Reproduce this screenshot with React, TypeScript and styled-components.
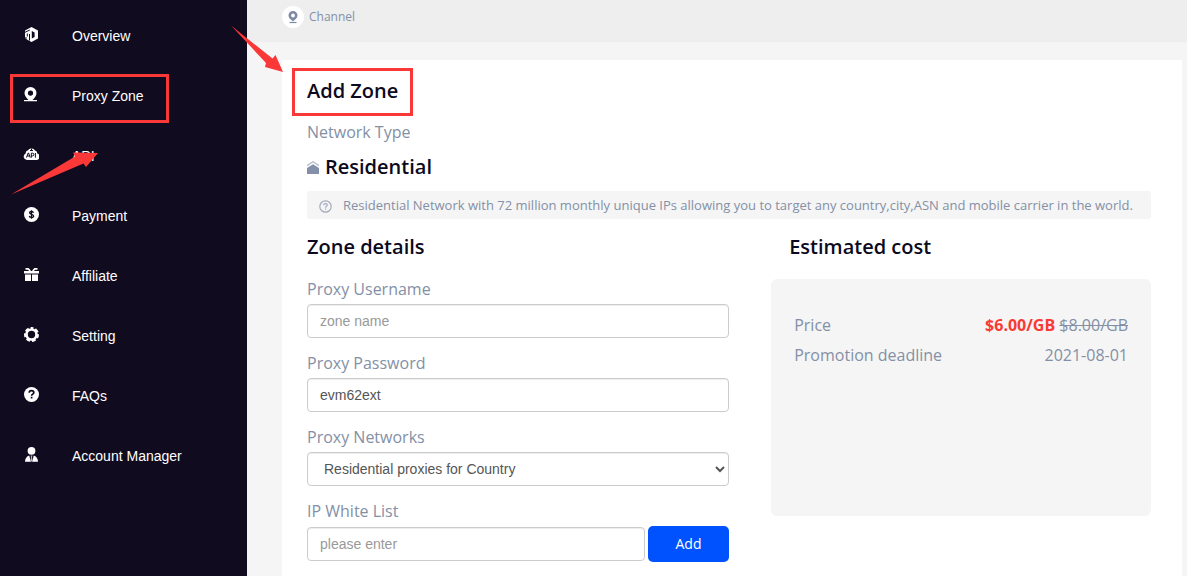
import React from "react";
import styled, { createGlobalStyle } from "styled-components";

const UI_FONT = '"Open Sans", "Noto Sans", sans-serif';
const CONTROL_FONT = '"Liberation Sans", Arial, sans-serif';
const MARK = "#fb3838";

const GlobalStyle = createGlobalStyle`
  *, *::before, *::after { box-sizing: border-box; }
  body { margin: 0; background: #f5f5f5; font-family: ${UI_FONT}; color: #0d0a20; }
  h1, h2, p, ul, dl, dd { margin: 0; padding: 0; }
`;

const Page = styled.div`
  position: relative;
  display: flex;
  min-height: 100vh;
`;

const Sidebar = styled.nav`
  flex: 0 0 247px;
  background: #110b20;
  padding-top: 6px;
`;

const NavList = styled.ul`
  list-style: none;
`;

const NavLink = styled.a`
  position: relative;
  display: flex;
  align-items: center;
  gap: 33px;
  height: 60px;
  padding-left: 23px;
  color: #fff;
  font: 14px/20px ${CONTROL_FONT};
  text-decoration: none;

  svg {
    display: block;
    width: 16px;
    height: 16px;
    margin-bottom: 4px;
  }
`;

const NavMark = styled.span`
  position: absolute;
  left: 10px;
  top: 8px;
  width: 159px;
  height: 49px;
  border: 3px solid ${MARK};
`;

const Main = styled.main`
  flex: 1;
  min-width: 0;
  display: flex;
  flex-direction: column;
`;

const TopBar = styled.header`
  display: flex;
  align-items: center;
  gap: 5px;
  height: 42px;
  padding: 0 35px 8px;
  background: #eeeeee;
  color: #8490a6;
  font-size: 12px;
  line-height: 20px;
`;

const ChannelBadge = styled.span`
  display: flex;
  align-items: center;
  justify-content: center;
  width: 22px;
  height: 22px;
  border-radius: 50%;
  background: #fff;
`;

const Card = styled.section`
  flex: 1;
  margin: 18px 5px 0 35px;
  padding: 16px 31px 14px 25px;
  background: #fff;
`;

const Heading = styled.h2<{ $indent?: boolean }>`
  display: flex;
  align-items: center;
  gap: 6px;
  padding-left: ${(p) => (p.$indent ? 18 : 0)}px;
  font-size: 20px;
  line-height: 30px;
  font-weight: 600;
`;

const MarkedTitle = styled.span`
  position: relative;

  &::after {
    content: "";
    position: absolute;
    inset: -8px -15px -10px;
    border: 3px solid ${MARK};
  }
`;

const NetworkType = styled.p`
  margin: 14px 0 8px;
  color: #8490a6;
  font-size: 16px;
  line-height: 24px;
`;

const Note = styled.p`
  display: flex;
  align-items: center;
  gap: 11px;
  min-height: 28px;
  margin: 9px 0 13px;
  padding: 0 12px;
  border-radius: 3px;
  background: #f5f5f5;
  color: #8490a6;
  font-size: 13px;
  line-height: 20px;

  svg { flex: none; margin-top: 3px; }
`;

const Columns = styled.div`
  display: grid;
  grid-template-columns: 50% 45%;
  justify-content: space-between;
  align-items: start;
`;

const Form = styled.form`
  display: flex;
  flex-direction: column;
  gap: 13px;
  margin-top: 15px;
`;

const Field = styled.div`
  display: flex;
  flex-direction: column;
  gap: 3px;
`;

const Label = styled.label`
  color: #8490a6;
  font-size: 16px;
  line-height: 24px;
`;

const Input = styled.input`
  width: 100%;
  min-width: 0;
  height: 34px;
  padding: 6px 12px;
  border: 1px solid #ccc;
  border-radius: 4px;
  background: #fff;
  box-shadow: inset 0 1px 1px rgba(0, 0, 0, 0.075);
  color: #555;
  font: 14px/20px ${CONTROL_FONT};

  &::placeholder { color: #999; opacity: 1; }
`;

const Select = styled(Input).attrs({ as: "select" })``;

const InputRow = styled.div`
  display: flex;
  align-items: center;
  gap: 3px;
`;

const AddButton = styled.button`
  flex: 0 0 81px;
  height: 36px;
  border: 0;
  border-radius: 5px;
  background: #0052ff;
  color: #fff;
  font: 14px/20px ${UI_FONT};
`;

const CostPanel = styled.dl`
  min-height: 237px;
  margin-top: 17px;
  padding: 31px 23px;
  border-radius: 6px;
  background: #f5f5f5;
  color: #8490a6;
  font-size: 16px;
  line-height: 30px;
`;

const CostRow = styled.div`
  display: flex;
  justify-content: space-between;
`;

const Price = styled.strong`
  color: #f93a34;
  font-weight: 700;
`;

const Arrows = styled.svg`
  position: absolute;
  left: 0;
  top: 0;
  pointer-events: none;
`;

const DARK = "#110b20";

const icons = {
  overview: (
    <svg viewBox="0 0 16 16">
      <path d="M8.500 1 15 4.500v8L8.500 16 2 12.500v-8z" fill="#fff" />
      <path d="M8.800 5 11.600 6.500v4.400L8.800 12.400z" fill={DARK} />
      <path d="M2 6.300 6.800 4M6.500 8v6.500M4.300 7.500v3" fill="none" stroke={DARK} strokeWidth="1" />
      <path d="M1.500 11h2.300v3.500H1.500z" fill={DARK} opacity=".6" />
    </svg>
  ),
  pin: (
    <svg viewBox="0 0 16 16">
      <path fillRule="evenodd" d="M7.500 1a6 6 0 0 1 6 6c0 2.900-2 5-4 7H14v1.300H1V14h4.500c-2-2-4-4.100-4-7a6 6 0 0 1 6-6zm0 3.500a2.600 2.600 0 1 0 0 5.200 2.600 2.600 0 0 0 0-5.200z" fill="#fff" />
    </svg>
  ),
  api: (
    <svg viewBox="0 0 16 16">
      <path d="M4 14a3.400 3.400 0 0 1-1.300-6.500A3 3 0 0 1 5 4.300 3.600 3.600 0 0 1 8.500 2.600 3.800 3.800 0 0 1 12 4.600a2.800 2.800 0 0 1 2.300 2.800A3.400 3.400 0 0 1 13 14z" fill="#fff" />
      <path d="M3.500 11.500 5.200 7h.4l1.600 4.500M4.200 10h2.300M8.300 11.700V7.200h1.200a1.300 1.300 0 0 1 0 2.700H8.300M12.400 7v4.700M8.500 2.600v2.200M7 4.500h3" fill="none" stroke={DARK} strokeWidth="1" />
    </svg>
  ),
  payment: (
    <svg viewBox="0 0 16 16">
      <circle cx="8.500" cy="8.500" r="7.500" fill="#fff" />
      <path d="M10.500 6.700C10.200 5.800 9.500 5.500 8.500 5.500c-1.100 0-1.900.5-1.900 1.300 0 2 4 1 4 3.100 0 .9-.8 1.500-2.100 1.500-1.200 0-2-.5-2.200-1.400M8.500 4.200v8.500" fill="none" stroke={DARK} strokeWidth="1.300" />
    </svg>
  ),
  affiliate: (
    <svg viewBox="0 0 16 16">
      <path d="M1 5h15v2.500H1zM2 8.600h6V15H2zM9 8.600h6V15H9z" fill="#fff" />
      <path d="M2.500 2.800h2.700L7.300 5M14.500 2.800h-2.700L9.700 5" fill="none" stroke="#fff" strokeWidth="1.700" />
    </svg>
  ),
  setting: (
    <svg viewBox="0 0 16 16">
      <circle cx="8.500" cy="8.500" r="5" fill="none" stroke="#fff" strokeWidth="2.600" />
      <circle cx="8.500" cy="8.500" r="6.500" fill="none" stroke="#fff" strokeWidth="2" strokeDasharray="3.834 2" strokeDashoffset="1.917" transform="rotate(-90 8.500 8.500)" />
    </svg>
  ),
  faqs: (
    <svg viewBox="0 0 16 16">
      <circle cx="8.500" cy="8.500" r="7.500" fill="#fff" />
      <path d="M6.200 6.800c0-1.500 1-2.200 2.300-2.200 1.400 0 2.300.8 2.300 2 0 1.600-2.200 1.500-2.200 3.200M8.600 10.800v1.700" fill="none" stroke={DARK} strokeWidth="1.700" />
    </svg>
  ),
  manager: (
    <svg viewBox="0 0 16 16">
      <circle cx="8.500" cy="4.800" r="3.900" fill="#fff" />
      <path d="M2 15.800c0-3.500 1.800-5.500 4.300-6.300l1.500 6.300zM15 15.800c0-3.500-1.800-5.500-4.300-6.300l-1.500 6.300z" fill="#fff" />
      <path d="M7.600 9.600h1.800l-.4 1.600.6 4.300H7.400l.6-4.300z" fill="#fff" opacity=".7" />
    </svg>
  ),
};

const navItems: { label: string; icon: keyof typeof icons; marked?: boolean }[] = [
  { label: "Overview", icon: "overview" },
  { label: "Proxy Zone", icon: "pin", marked: true },
  { label: "API", icon: "api" },
  { label: "Payment", icon: "payment" },
  { label: "Affiliate", icon: "affiliate" },
  { label: "Setting", icon: "setting" },
  { label: "FAQs", icon: "faqs" },
  { label: "Account Manager", icon: "manager" },
];

export default function App() {
  return (
    <Page>
      <GlobalStyle />
      <Sidebar>
        <NavList>
          {navItems.map((item) => (
            <li key={item.label}>
              <NavLink href="#">
                {icons[item.icon]}
                {item.label}
                {item.marked && <NavMark />}
              </NavLink>
            </li>
          ))}
        </NavList>
      </Sidebar>

      <Main>
        <TopBar>
          <ChannelBadge>
            <svg width="12" height="14" viewBox="0 0 12 14">
              <path fillRule="evenodd" d="M6 1a4.500 4.500 0 0 1 4.500 4.500C10.500 7.800 8 9.600 6 11.500 4 9.600 1.500 7.800 1.500 5.500A4.500 4.500 0 0 1 6 1zm0 2.600a1.900 1.900 0 1 0 0 3.800 1.900 1.900 0 0 0 0-3.800z" fill="#7f89a5" />
              <path d="M2.500 12.500h7" stroke="#7f89a5" strokeWidth="1.200" />
            </svg>
          </ChannelBadge>
          Channel
        </TopBar>

        <Card>
          <Heading as="h1">
            <MarkedTitle>Add Zone</MarkedTitle>
          </Heading>
          <NetworkType>Network Type</NetworkType>
          <Heading>
            <svg width="12" height="13" viewBox="0 0 12 13">
              <path d="M0 7 6 3.200 12 7v6H0z" fill="#8490a9" />
              <path d="M0 4.600 6 .8l6 3.800" fill="none" stroke="#b5bccb" strokeWidth="1.300" />
            </svg>
            Residential
          </Heading>
          <Note>
            <svg width="13" height="13" viewBox="0 0 13 13" fill="none" stroke="#a3abbd" strokeWidth="1.200">
              <circle cx="6.500" cy="6.500" r="5.700" />
              <path d="M4.700 5.300c0-1.200.8-1.700 1.800-1.700s1.800.6 1.800 1.500c0 1.200-1.700 1.200-1.700 2.600M6.600 8.600v1.200" />
            </svg>
            Residential Network with 72 million monthly unique IPs allowing you to target any country,city,ASN and mobile carrier in the world.
          </Note>

          <Columns>
            <section>
              <Heading>Zone details</Heading>
              <Form onSubmit={(e) => e.preventDefault()}>
                <Field>
                  <Label htmlFor="username">Proxy Username</Label>
                  <Input id="username" placeholder="zone name" />
                </Field>
                <Field>
                  <Label htmlFor="password">Proxy Password</Label>
                  <Input id="password" defaultValue="evm62ext" />
                </Field>
                <Field>
                  <Label htmlFor="networks">Proxy Networks</Label>
                  <Select id="networks">
                    <option>Residential proxies for Country</option>
                  </Select>
                </Field>
                <Field>
                  <Label htmlFor="whitelist">IP White List</Label>
                  <InputRow>
                    <Input id="whitelist" placeholder="please enter" />
                    <AddButton type="button">Add</AddButton>
                  </InputRow>
                </Field>
              </Form>
            </section>

            <section>
              <Heading $indent>Estimated cost</Heading>
              <CostPanel>
                <CostRow>
                  <dt>Price</dt>
                  <dd>
                    <Price>$6.00/GB</Price> <s>$8.00/GB</s>
                  </dd>
                </CostRow>
                <CostRow>
                  <dt>Promotion deadline</dt>
                  <dd>2021-08-01</dd>
                </CostRow>
              </CostPanel>
            </section>
          </Columns>
        </Card>
      </Main>

      <Arrows width="300" height="200" viewBox="0 0 300 200" fill={MARK} aria-hidden="true">
        <path d="M231 25.500 266 63 265 67 283 72 275.500 55 272.500 58.500z" />
        <path d="M11 194.500 75 156.500 73 152.500 98 153 86 167 83.500 163.500z" />
      </Arrows>
    </Page>
  );
}
